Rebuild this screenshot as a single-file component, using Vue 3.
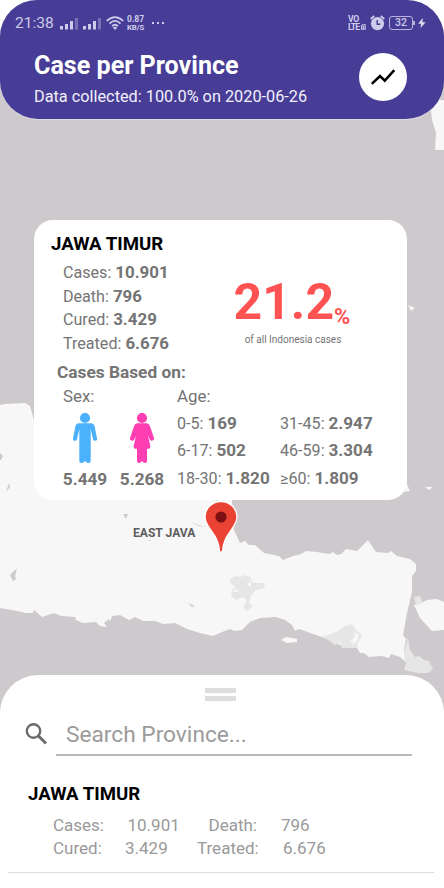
<script setup>
const summary = [
  { label: 'Cases:', value: '10.901' },
  { label: 'Death:', value: '796' },
  { label: 'Cured:', value: '3.429' },
  { label: 'Treated:', value: '6.676' },
]
const ages = [
  { label: '0-5:', value: '169' },
  { label: '31-45:', value: '2.947' },
  { label: '6-17:', value: '502' },
  { label: '46-59:', value: '3.304' },
  { label: '18-30:', value: '1.820' },
  { label: '≥60:', value: '1.809' },
]
</script>

<template>
  <main class="phone">
    <svg class="map" viewBox="0 0 444 888" aria-hidden="true">
      <g fill="#f7f7f7">
        <path d="M0 405 5 404 25 403 30 406 34 420V440H232V502L234 530 240 543 245 541 249 545 255 545 264 553 279 556 283 560 293 556 301 554 306 551 317 552 329 554 333 552 337 555 341 554 346 549 357 551 368 540 376 552 388 553 391 551 397 556 410 559 416 564V571L412 576V592L407 613 403 635 406 639 404 650 406 662 400 657 391 654 389 658 382 656 369 657 364 653 360 653 357 648 340 645 322 637 299 629 295 631 292 625 285 620 276 617 260 618 250 622 242 630 234 631 230 629 222 632 213 636 200 633 187 629 175 623 163 624 155 621 143 621 135 617 129 620 120 615 112 616 110 622 109 619 104 623 107 627 100 626 96 622 83 623 76 620 75 617 61 616 54 613 42 617 34 610 33 613 26 613 17 611 0 608Z" />
        <path d="M430 100H444V150H435L436 133 432 120Z" />
        <path d="M414 605 423 602 427 600 437 599 444 602V630L432 631 420 618Z" />
        <path d="M281 640 286 637 297 639V642L287 643Z" />
        <path d="M408 305 415 308 411 311ZM406 482 410 491 404 492ZM425 487 433 487 429 490Z" />
      </g>
      <g fill="#e6e6e6">
        <path d="M231 578 236 576 241 577 244 575 250 577 253 583 264 583 265 588 256 590 251 596 249 603 253 606 247 611 243 608 247 600 242 597 236 600 231 596 232 590 235 587 230 582Z" />
        <path d="M322 637 336 632 345 626 352 624 356 630 362 635 357 645 358 648 342 648 340 642 335 645 330 641Z" />
        <path d="M414 597 420 596 423 603 416 605Z" />
        <path d="M408 637 410 650 415 657 419 656 424 660 429 661 433 669 428 673 418 673 404 670 406 663 404 652Z" />
      </g>
      <path d="M233 592 236 588 238 592ZM247 585 251 580 251 587ZM355 632 359 635 357 641 354 644 350 641 354 638Z" fill="#f7f7f7" />
      <g fill="#cec9ce">
        <path d="M0 453 3 456 1 460H0ZM9 483 10 487 6 492ZM17 568 15 576 16 579 13 581 10 575ZM123 514H128L126 519ZM190 522 205 527 199 526ZM188 603 195 606 192 607ZM148 541H151L150 540Z" />
      </g>
    </svg>

    <header class="top">
      <div class="status">
        <span class="clock">21:38</span>
        <svg class="signals" viewBox="0 0 41 14">
          <g fill="#cfcbea">
            <rect x="0" y="10" width="3" height="3.500" /><rect x="5" y="8" width="3" height="5.500" /><rect x="10" y="5" width="3" height="8.500" />
            <rect x="23" y="10" width="3" height="3.500" /><rect x="28" y="8" width="3" height="5.500" /><rect x="33" y="5" width="3" height="8.500" />
          </g>
          <path d="M15 2h3v11.500h-3zM38 2h3v11.500h-3z" fill="#7971b7" />
        </svg>
        <svg class="wifi" viewBox="0 0 18 14">
          <g fill="none" stroke="#cfcbea" stroke-width="1.700"><path d="M.7 5Q9-2.800 17.300 5" /><path d="M3.500 7.600Q9 2.300 14.500 7.600" /><path d="M6 10.200Q9 7.300 12 10.200" /></g>
          <path d="M9 14 6.800 11.600Q9 10 11.200 11.600Z" fill="#cfcbea" />
        </svg>
        <div class="stack rate"><span>0.87</span><span class="unit">KB/S</span></div>
        <svg class="dots" viewBox="0 0 12 2" fill="#cfcbea"><path d="M0 0h2v2H0zM5 0h2v2H5zM10 0h2v2h-2z" /></svg>
        <div class="stack volte"><span>VO</span><span class="lte">LTE<svg class="sim" viewBox="0 0 5 6"><path d="M.6 5.400V1.800L1.800.6h2.600v4.800ZM2.500 2v3" fill="none" stroke="#cfcbea" stroke-width="1.200" /></svg></span></div>
        <svg class="alarm" viewBox="0 0 15 16">
          <circle cx="7.500" cy="8.600" r="6.600" fill="#cfcbea" />
          <path d="M.7 4 4.200 1M14.300 4 10.800 1" stroke="#cfcbea" stroke-width="1.700" />
          <path d="M7.200 5V9.200H10.200" fill="none" stroke="#473d96" stroke-width="1.400" />
        </svg>
        <div class="battery">32</div>
        <svg class="bolt" viewBox="0 0 8 10"><path d="M4.800 0 0 5.700h3L2.600 10 7.600 4.200H4.500Z" fill="#dedbf0" /></svg>
      </div>
      <div class="heading">
        <div>
          <h1>Case per Province</h1>
          <p>Data collected: 100.0% on 2020-06-26</p>
        </div>
        <button class="trend" aria-label="Trend">
          <svg viewBox="0 0 26 18"><path d="M1.800 15.800 10 8 14.800 12.700 24.300 2.200" fill="none" stroke="#000" stroke-width="2.500" /></svg>
        </button>
      </div>
    </header>

    <section class="card">
      <h2>JAWA TIMUR</h2>
      <div class="overview">
        <ul>
          <li v-for="s in summary" :key="s.label">{{ s.label }} <b>{{ s.value }}</b></li>
        </ul>
        <div class="share">
          <p class="percent">21.2<span>%</span></p>
          <p class="note">of all Indonesia cases</p>
        </div>
      </div>
      <h3>Cases Based on:</h3>
      <div class="based">
        <div class="sex">
          <p class="sub">Sex:</p>
          <div class="people">
            <div>
              <svg viewBox="0 0 24 50" fill="#4bb1fc">
                <circle cx="12" cy="5" r="5.100" />
                <path d="M5.500 10.200h13q2.400 0 3 2.600L24 25.500q.3 2-1.600 2.300-1.900.3-2.400-1.500L17.700 16V48q0 2-2.300 2-2 0-2.300-1.500h-2.200Q10.600 50 8.600 50 6.300 50 6.300 48V16L4 26.300Q3.500 28.100 1.600 27.800-.3 27.500 0 25.500L2.500 12.800Q3.100 10.200 5.500 10.200Z" />
              </svg>
              <b>5.449</b>
            </div>
            <div>
              <svg viewBox="0 0 24 50" fill="#ff3eb1">
                <circle cx="12" cy="5" r="5.100" />
                <path d="M7.500 10.200h9q2.500 0 3.300 2.600L24 25q.4 2-1.500 2.600-1.900.4-2.700-1.100L18 22.500 20.300 33q.3 2.700-1.700 2.700H17V48q0 2-2.200 2-1.700 0-1.900-1.500h-1.800Q10.900 50 9.200 50 7 50 7 48V35.700H5.400Q3.400 35.700 3.700 33L6 22.500 4.200 26.500Q3.400 28 1.500 27.600-.4 27 0 25L4.200 12.800Q5 10.200 7.500 10.200Z" />
              </svg>
              <b>5.268</b>
            </div>
          </div>
        </div>
        <div class="age">
          <p class="sub">Age:</p>
          <div class="ages">
            <span v-for="a in ages" :key="a.label">{{ a.label }} <b>{{ a.value }}</b></span>
          </div>
        </div>
      </div>
    </section>

    <div class="place">
      <span>EAST JAVA</span>
      <svg viewBox="0 0 34 54">
        <path d="M17 1.500C8.200 1.500 1 8.200 1 17 1 28 14.500 33 15.600 51.800H18.400C19.500 33 33 28 33 17 33 8.200 25.800 1.500 17 1.500Z" fill="#ea4335" stroke="#fff" stroke-width="1.300" />
        <circle cx="17" cy="17" r="5.600" fill="#7c1012" />
      </svg>
    </div>

    <section class="sheet">
      <div class="handle"><i></i><i></i></div>
      <div class="search">
        <svg viewBox="0 0 22 22" fill="none" stroke="#6b6b6b"><circle cx="8.500" cy="8" r="6.700" stroke-width="2.400" /><path d="M13.500 13 21 20.500" stroke-width="3" /></svg>
        <div class="field">Search Province...</div>
      </div>
      <article>
        <h2>JAWA TIMUR</h2>
        <p class="line first"><span>Cases:</span><span>10.901</span><span>Death:</span><span>796</span></p>
        <p class="line second"><span>Cured:</span><span>3.429</span><span>Treated:</span><span>6.676</span></p>
      </article>
      <hr>
    </section>
  </main>
</template>

<style>
body { margin: 0; background: #fff; }
</style>

<style scoped>
* { box-sizing: border-box; }
h1, h2, h3, p, ul { margin: 0; padding: 0; font-weight: 400; list-style: none; }
.phone { position: relative; display: flex; flex-direction: column; width: 444px; height: 888px; overflow: hidden; border-radius: 37px 37px 0 0; background: #cec9cd; font-family: Roboto, sans-serif; white-space: nowrap; color: #747474; }
.map { position: absolute; inset: 0; width: 444px; height: 888px; }
.top, .card, .place, .sheet { position: relative; flex: none; }
.top { height: 119px; border-radius: 0 0 38px 38px; background: #473d96; box-shadow: 0 1px 1px #dedbe4; color: #fff; }
.status { display: flex; align-items: center; height: 44px; padding: 2px 18px 0 15px; color: #cfcbea; }
.clock { width: 45px; font-size: 15.5px; line-height: 20px; }
.signals { width: 41px; height: 14px; }
.wifi { width: 18px; height: 14px; margin-left: 5px; }
.stack { display: flex; flex-direction: column; line-height: 7px; font-weight: 700; }
.rate { width: 18px; margin-left: 3px; gap: 1px; font-size: 8.5px; }
.unit { font-size: 7.8px; letter-spacing: -.1px; }
.dots { width: 12px; height: 2px; margin-left: 7px; }
.volte { width: 18px; margin-left: auto; gap: 1px; font-size: 8.7px; letter-spacing: -.3px; }
.lte { display: flex; align-items: center; letter-spacing: -.9px; }
.sim { width: 5px; height: 6px; margin-left: 2px; }
.alarm { width: 15px; height: 16px; margin-left: 4px; }
.battery { position: relative; width: 24px; height: 14px; margin-left: 4px; border: 1.5px solid #b8b3dd; border-radius: 3px; font-size: 10.5px; line-height: 12px; font-weight: 500; text-align: center; }
.battery::after { content: ''; position: absolute; right: -3px; top: 4px; width: 2px; height: 4px; background: #b8b3dd; }
.bolt { width: 8px; height: 10px; margin-left: 5px; }
.heading { display: flex; justify-content: space-between; padding: 5px 37px 0 34px; }
h1 { height: 33px; font-size: 25.1px; line-height: 33px; font-weight: 700; }
.heading p { padding-top: 1px; font-size: 16.3px; line-height: 28px; color: #f2f0fa; }
.trend { display: flex; align-items: center; justify-content: center; width: 48px; height: 48px; margin-top: 4px; padding: 0; border: 0; border-radius: 50%; background: #fff; }
.trend svg { width: 26px; height: 18px; }
.card { width: 373px; height: 280px; margin: 101px 0 0 34px; padding: 12px 0 0 17px; border-radius: 19px; background: #fff; }
h2 { font-size: 18.6px; line-height: 24px; font-weight: 700; color: #000; }
.overview { display: flex; padding: 5px 0 0 12px; height: 104px; }
.overview ul { width: 170.5px; font-size: 16.1px; line-height: 23.7px; }
.overview b { font-size: 16.9px; }
.share { width: 119px; padding-top: 12px; }
.percent { height: 58px; font-size: 50px; line-height: 58px; font-weight: 700; color: #ff5252; }
.percent span { position: relative; top: 5px; font-size: 22px; font-weight: 700; }
.note { padding-top: 2px; font-size: 10px; line-height: 14px; text-align: center; }
h3 { margin-left: 6px; font-size: 17.3px; line-height: 24px; font-weight: 700; }
.based { display: flex; padding-left: 12px; }
.sex { width: 114px; }
.sub { font-size: 16.9px; line-height: 24px; }
.people { display: flex; gap: 13px; padding-top: 5px; }
.people div { display: flex; flex-direction: column; align-items: center; width: 44px; }
.people svg { width: 24px; height: 50px; }
.people b { padding-top: 4px; font-size: 17.2px; line-height: 24px; }
.ages { display: grid; grid-template-columns: 103px auto; grid-auto-rows: 27.3px; font-size: 16.1px; line-height: 27.3px; padding-top: 2px; }
.ages b { font-size: 17.1px; }
b { font-weight: 700; }
.place { display: flex; height: 54px; padding-left: 133px; }
.place span { width: 71px; padding-top: 25px; font-size: 12.1px; line-height: 16px; font-weight: 700; color: #5d5d5d; }
.place svg { width: 34px; height: 54px; }
.sheet { height: 213px; margin-top: 121px; padding-top: 13px; border-radius: 38px 38px 0 0; background: #fff; }
.handle { display: flex; flex-direction: column; gap: 3px; width: 31px; margin-left: 205px; }
.handle i { height: 5px; background: #dedede; }
.search { display: flex; padding: 14px 32px 0 25px; }
.search svg { width: 22px; height: 22px; margin-top: 8px; }
.field { flex: 1; height: 41px; margin-left: 9px; padding-left: 10px; border-bottom: 2px solid #b9b9b9; font-size: 22.7px; line-height: 40px; color: #9b9b9b; }
article { padding: 26px 0 0 28px; }
.line { display: flex; padding-left: 25px; font-size: 17px; line-height: 23.5px; color: #999; }
.first { padding-top: 7.5px; }
.line span:nth-child(1) { width: 74.5px; }
.line span:nth-child(2) { width: 81px; }
.line span:nth-child(3) { width: 72.5px; }
.second span:nth-child(1) { width: 72px; }
.second span:nth-child(2) { width: 72px; }
.second span:nth-child(3) { width: 86px; }
hr { height: 1px; margin: 11.5px 10px 0 8px; border: 0; background: #ddd; }
</style>
